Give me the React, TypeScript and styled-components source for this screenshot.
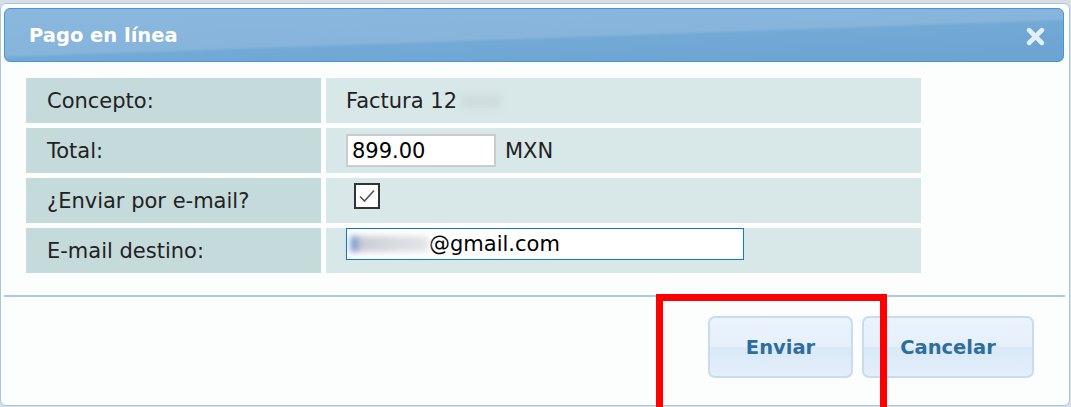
import React from "react"
import styled, { createGlobalStyle } from "styled-components"

const GlobalStyle = createGlobalStyle`
  body {
    margin: 0;
    background: #d9dee3;
    font-family: "DejaVu Sans", Verdana, sans-serif;
  }
`

const Page = styled.div`
  padding-top: 3px;
  width: 1071px;
  height: 404px;
`

const Dialog = styled.div`
  position: relative;
  box-sizing: border-box;
  width: 1070px;
  height: 403px;
  background: #fcfdfd;
  border: 1px solid #a6c9e2;
  border-radius: 6px;
  padding: 4px 5px 0 3px;
  display: flex;
  flex-direction: column;
`

const TitleBar = styled.div`
  box-sizing: border-box;
  height: 54px;
  border: 1px solid #4596d8;
  border-radius: 6px;
  background: linear-gradient(
    178deg,
    #8ab8dd 0%,
    #86b4db 52%,
    #72a9d5 56%,
    #6ba3d1 100%
  );
  display: flex;
  align-items: center;
  justify-content: space-between;
  padding: 0 18px 0 24px;
`

const Title = styled.span`
  color: #ffffff;
  font-weight: bold;
  font-size: 19.5px;
`

const CloseButton = styled.span`
  display: flex;
  opacity: 0.82;
  margin-top: 2px;
`

const FormGrid = styled.div`
  display: grid;
  grid-template-columns: 295px 595px;
  grid-auto-rows: 45px;
  column-gap: 5px;
  row-gap: 5px;
  margin: 16px 0 0 22px;
  font-size: 21px;
  color: #222;
`

const LabelCell = styled.div`
  background: #c5dadb;
  display: flex;
  align-items: center;
  padding-left: 21px;
`

const ValueCell = styled.div`
  background: #d8e7e7;
  display: flex;
  align-items: center;
  gap: 9px;
  padding-left: 20px;
`

const TextInput = styled.div<{ $w: number; $focus?: boolean }>`
  box-sizing: border-box;
  width: ${({ $w }) => $w}px;
  height: ${({ $focus }) => ($focus ? 32 : 33)}px;
  align-self: ${({ $focus }) => ($focus ? "flex-start" : "center")};
  background: #fff;
  border: ${({ $focus }) => ($focus ? "1px solid #0a78d4" : "2px solid #c8cccd")};
  display: flex;
  align-items: center;
  padding-left: 4px;
  color: #000;
  font-size: 21px;
`

const Redacted = styled.span<{ $w: number }>`
  display: inline-block;
  width: ${({ $w }) => $w}px;
  height: 16px;
  background: linear-gradient(90deg, #4a6fc4 0%, #c9ccd6 12%, #d8dbe0 60%, #e4e6ea 100%);
  filter: blur(3px);
`

const RedactedSoft = styled.span<{ $w: number }>`
  display: inline-block;
  width: ${({ $w }) => $w}px;
  height: 13px;
  margin-left: 4px;
  background: #cfdcde;
  filter: blur(3px);
`

const CheckBox = styled.span`
  box-sizing: border-box;
  width: 26px;
  height: 26px;
  margin-left: 8px;
  margin-top: -10px;
  border: 2px solid #333;
  background: #fff;
  display: flex;
  align-items: center;
  justify-content: center;
`

const Separator = styled.div`
  height: 2px;
  background: #a9cbe4;
  margin-top: 22px;
  margin-right: -1px;
`

const ButtonRow = styled.div`
  display: flex;
  justify-content: flex-end;
  gap: 9px;
  margin-top: 19px;
  padding-right: 30px;
`

const Button = styled.button<{ $w: number }>`
  box-sizing: border-box;
  width: ${({ $w }) => $w}px;
  height: 62px;
  border: 2px solid #c9dcee;
  border-radius: 7px;
  background: linear-gradient(
    180deg,
    #eaf3fc 0%,
    #e6f0fb 48%,
    #d9e9f8 52%,
    #e4eefa 100%
  );
  color: #2e6e9e;
  font-family: "DejaVu Sans", Verdana, sans-serif;
  font-weight: bold;
  font-size: 19.5px;
  cursor: pointer;
`

const Highlight = styled.div`
  position: absolute;
  left: 655px;
  top: 290px;
  width: 231px;
  height: 120px;
  box-sizing: border-box;
  border: 7px solid #ff0000;
  pointer-events: none;
`

export default function App() {
  return (
    <Page>
      <GlobalStyle />
      <Dialog>
        <TitleBar>
          <Title>Pago en línea</Title>
          <CloseButton>
            <svg width="19" height="19" viewBox="0 0 18 18">
              <path d="M3 3 L15 15 M15 3 L3 15" stroke="#fff" strokeWidth="4.5" strokeLinecap="round" />
            </svg>
          </CloseButton>
        </TitleBar>

        <FormGrid>
          <LabelCell>Concepto:</LabelCell>
          <ValueCell>
            <span>
              Factura 12
              <RedactedSoft $w={40} />
            </span>
          </ValueCell>

          <LabelCell>Total:</LabelCell>
          <ValueCell>
            <TextInput $w={150}>899.00</TextInput>
            <span>MXN</span>
          </ValueCell>

          <LabelCell>¿Enviar por e-mail?</LabelCell>
          <ValueCell>
            <CheckBox>
              <svg width="18" height="18" viewBox="0 0 18 18">
                <polyline points="2,9.5 6.5,14 16,3.5" fill="none" stroke="#555" strokeWidth="1.6" />
              </svg>
            </CheckBox>
          </ValueCell>

          <LabelCell>E-mail destino:</LabelCell>
          <ValueCell>
            <TextInput $w={398} $focus>
              <Redacted $w={78} />
              @gmail.com
            </TextInput>
          </ValueCell>
        </FormGrid>

        <Separator />

        <ButtonRow>
          <Button $w={145}>Enviar</Button>
          <Button $w={172}>Cancelar</Button>
        </ButtonRow>

        <Highlight />
      </Dialog>
    </Page>
  )
}
